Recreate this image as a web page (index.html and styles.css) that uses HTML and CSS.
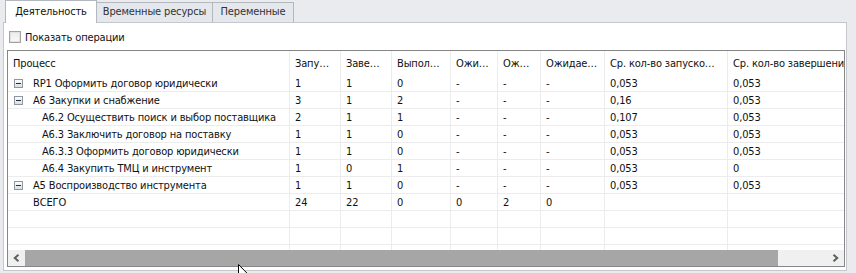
FILE: index.html
```html
<!DOCTYPE html>
<html lang="ru">
<head>
<meta charset="UTF-8" />
<title>Статистика процессов</title>
<link rel="stylesheet" href="styles.css">
</head>
<body>

<div class="tabs">
  <div class="tab active">Деятельность</div>
  <div class="tab wide">Временные ресурсы</div>
  <div class="tab">Переменные</div>
</div>

<div class="panel">
  <label class="option"><span class="check"></span>Показать операции</label>

  <div class="grid">
    <div class="row head">
      <div>Процесс</div><div>Запу…</div><div>Заве…</div><div>Выпол…</div><div>Ожи…</div><div>Ож…</div><div>Ожидае…</div><div>Ср. кол-во запуско…</div><div>Ср. кол-во завершения</div>
    </div>
    <div class="row">
      <div class="name"><span class="toggle"></span>RP1 Оформить договор юридически</div><div>1</div><div>1</div><div>0</div><div>-</div><div>-</div><div>-</div><div>0,053</div><div>0,053</div>
    </div>
    <div class="row">
      <div class="name"><span class="toggle"></span>А6 Закупки и снабжение</div><div>3</div><div>1</div><div>2</div><div>-</div><div>-</div><div>-</div><div>0,16</div><div>0,053</div>
    </div>
    <div class="row">
      <div class="name sub">А6.2 Осуществить поиск и выбор поставщика</div><div>2</div><div>1</div><div>1</div><div>-</div><div>-</div><div>-</div><div>0,107</div><div>0,053</div>
    </div>
    <div class="row">
      <div class="name sub">А6.3 Заключить договор на поставку</div><div>1</div><div>1</div><div>0</div><div>-</div><div>-</div><div>-</div><div>0,053</div><div>0,053</div>
    </div>
    <div class="row">
      <div class="name sub">А6.3.3 Оформить договор юридически</div><div>1</div><div>1</div><div>0</div><div>-</div><div>-</div><div>-</div><div>0,053</div><div>0,053</div>
    </div>
    <div class="row">
      <div class="name sub">А6.4 Закупить ТМЦ и инструмент</div><div>1</div><div>0</div><div>1</div><div>-</div><div>-</div><div>-</div><div>0,053</div><div>0</div>
    </div>
    <div class="row">
      <div class="name"><span class="toggle"></span>А5 Воспроизводство инструмента</div><div>1</div><div>1</div><div>0</div><div>-</div><div>-</div><div>-</div><div>0,053</div><div>0,053</div>
    </div>
    <div class="row">
      <div class="name total">ВСЕГО</div><div>24</div><div>22</div><div>0</div><div>0</div><div>2</div><div>0</div><div></div><div></div>
    </div>
    <div class="row">
      <div></div><div></div><div></div><div></div><div></div><div></div><div></div><div></div><div></div>
    </div>
    <div class="row">
      <div></div><div></div><div></div><div></div><div></div><div></div><div></div><div></div><div></div>
    </div>
    <div class="row filler">
      <div></div><div></div><div></div><div></div><div></div><div></div><div></div><div></div><div></div>
    </div>

    <div class="hscroll">
      <div class="btn"><svg width="7" height="8" viewBox="0 0 7 8"><polyline points="5.5,0.8 1.8,4 5.5,7.2" /></svg></div>
      <div class="thumb"></div>
      <div class="track"></div>
      <div class="btn"><svg width="7" height="8" viewBox="0 0 7 8"><polyline points="1.5,0.8 5.2,4 1.5,7.2" /></svg></div>
    </div>
  </div>
</div>

<svg class="cursor" width="12" height="19" viewBox="0 0 12 19">
  <path d="M0.5 0.5 L0.5 16 L4.2 12.4 L7 18.5 L9.2 17.5 L6.5 11.5 L11.3 11.5 Z" />
</svg>

</body>
</html>
```

FILE: styles.css
```css
body {
  margin: 0;
  width: 856px;
  height: 273px;
  overflow: hidden;
  position: relative;
  background: #e9ebef;
  color: #111;
  font-family: "DejaVu Sans Condensed", "DejaVu Sans", sans-serif;
  font-size: 11px;
  letter-spacing: -0.15px;
}

/* вкладки */
.tabs {
  display: flex;
  align-items: flex-end;
  height: 22px;
  padding-left: 5px;
}
.tab {
  width: 80px;
  height: 19px;
  line-height: 18px;
  text-align: center;
  margin-left: -1px;
  border: 1px solid #b3b7be;
  border-bottom: none;
  background: #e4e7eb;
  color: #333;
  box-sizing: content-box;
}
.tab.wide {
  width: 115px;
}
.tab:first-child {
  margin-left: 0;
}
.tab.active {
  position: relative;
  width: 90px;
  height: 22px;
  line-height: 21px;
  margin-bottom: -1px;
  background: #fff;
  color: #111;
}

.panel {
  margin-left: 3px;
  width: 844px;
  border: 1px solid #c4c7cc;
  background: #fff;
  padding: 0 3px 3px 3px;
  box-sizing: border-box;
}

.option {
  display: flex;
  align-items: center;
  height: 12px;
  padding: 8px 0 7px 2px;
}
.check {
  width: 10px;
  height: 10px;
  margin-right: 4px;
  border: 1px solid #a2a2a2;
  background: linear-gradient(#ececec, #f8f8f8);
  box-shadow: inset 0 0 0 1px #e0e0e0;
}

/* таблица */
.grid {
  border: 1px solid #868686;
  width: 836px;
  overflow: hidden;
}
.row {
  display: grid;
  grid-template-columns: 282px 51px 51px 59px 47px 43px 64px 123px 116px;
  height: 17px;
}
.row > div {
  border-right: 1px solid #ececec;
  border-bottom: 1px solid #ececec;
  padding-left: 5px;
  line-height: 18px;
  white-space: nowrap;
  overflow: hidden;
}
.row > div:last-child {
  border-right: none;
}
.row.head {
  height: 24px;
}
.row.head > div {
  border-bottom: none;
  line-height: 26px;
}
.row.filler {
  height: 5px;
}
.row.filler > div {
  border-bottom: none;
}

.name {
  display: flex;
  align-items: flex-start;
}
.name.sub {
  padding-left: 34px !important;
}
.name.total {
  padding-left: 25px !important;
}
.toggle {
  position: relative;
  flex: none;
  width: 7px;
  height: 7px;
  margin: 4px 10px 0 1px;
  border: 1px solid #8d97a2;
  background: linear-gradient(#fcfdfe, #d9dee5);
}
.toggle::after {
  content: "";
  position: absolute;
  left: 1px;
  top: 3px;
  width: 5px;
  height: 1px;
  background: #2b2b2b;
}

.hscroll {
  display: flex;
  height: 16px;
  background: #f0f0f0;
}
.hscroll .btn {
  width: 17px;
  display: flex;
  align-items: center;
  justify-content: center;
}
.hscroll .btn svg polyline {
  fill: none;
  stroke: #5f5f5f;
  stroke-width: 2;
}
.thumb {
  width: 753px;
  background: #a6a6a6;
}
.track {
  flex: 1;
}

.cursor {
  position: absolute;
  left: 238px;
  top: 264px;
}
.cursor path {
  fill: #fff;
  stroke: #000;
  stroke-width: 1;
}
```
